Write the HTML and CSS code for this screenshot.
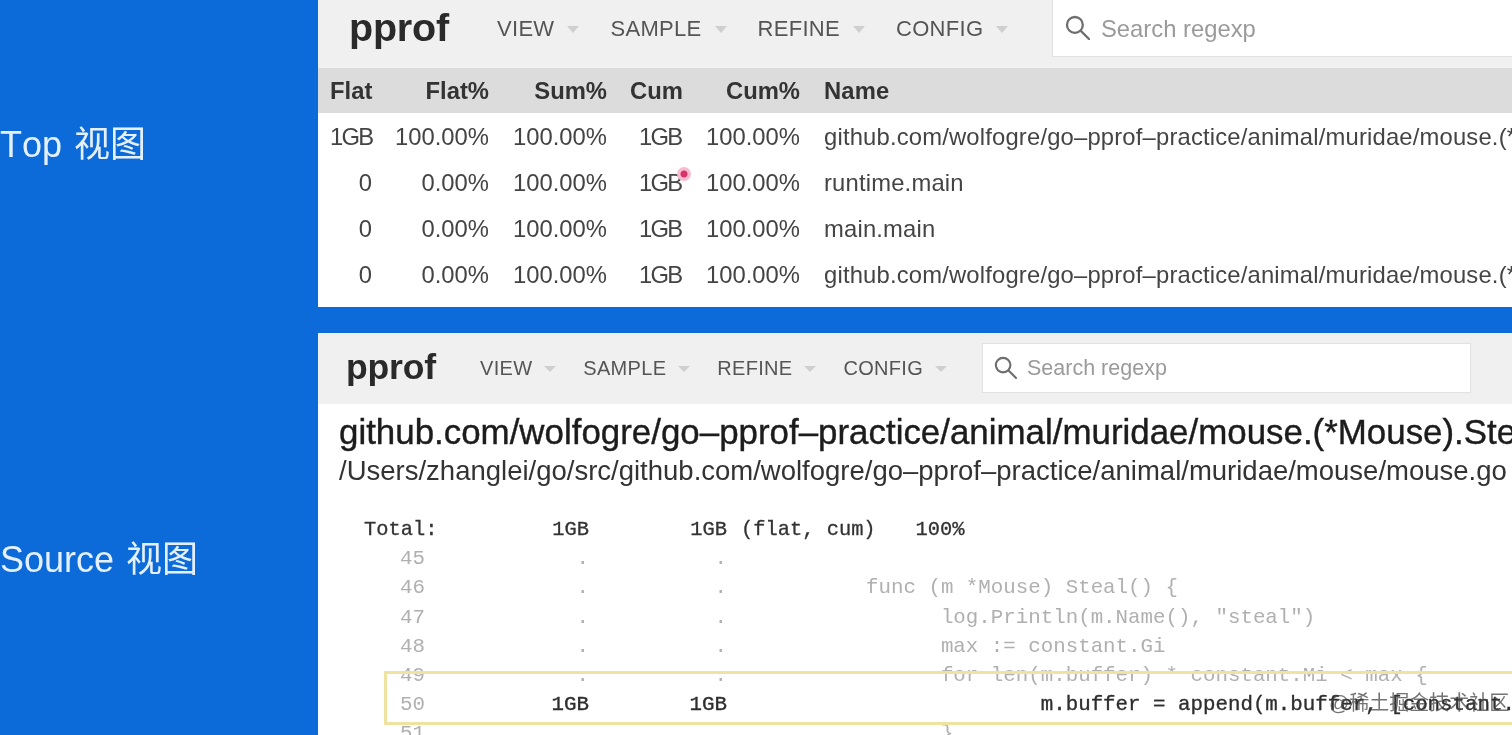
FILE: index.html
```html
<!DOCTYPE html>
<html lang="en">
<head>
<meta charset="utf-8">
<title>pprof views</title>
<link rel="stylesheet" href="styles.css">
</head>
<body>
<div class="slide">
  <aside class="side">
    <div class="label label-top">Top 视图</div>
    <div class="label label-source">Source 视图</div>
  </aside>
  <main class="main">
    <section class="panel panel-top">
      <header class="bar bar-lg">
        <div class="brand">pprof</div>
        <nav class="nav">
          <span class="nav-item">VIEW<i class="tri"></i></span>
          <span class="nav-item">SAMPLE<i class="tri"></i></span>
          <span class="nav-item">REFINE<i class="tri"></i></span>
          <span class="nav-item">CONFIG<i class="tri"></i></span>
        </nav>
        <div class="search">
          <svg class="glass" viewBox="0 0 24 24" fill="none" stroke="currentColor" stroke-width="2.2" stroke-linecap="round"><circle cx="9.5" cy="9.5" r="7.6"/><path d="M15.2 15.2 23 23"/></svg>
          <span class="placeholder">Search regexp</span>
        </div>
      </header>
      <div class="table">
        <div class="tr th"><span>Flat</span><span>Flat%</span><span>Sum%</span><span>Cum</span><span>Cum%</span><span class="name">Name</span></div>
        <div class="tr"><span class="gb">1GB</span><span>100.00%</span><span>100.00%</span><span class="gb">1GB</span><span>100.00%</span><span class="name">github.com/wolfogre/go–pprof–practice/animal/muridae/mouse.(*Mouse).Steal</span></div>
        <div class="tr"><span>0</span><span>0.00%</span><span>100.00%</span><span class="gb has-dot">1GB<i class="cursor-dot"></i></span><span>100.00%</span><span class="name">runtime.main</span></div>
        <div class="tr"><span>0</span><span>0.00%</span><span>100.00%</span><span class="gb">1GB</span><span>100.00%</span><span class="name">main.main</span></div>
        <div class="tr"><span>0</span><span>0.00%</span><span>100.00%</span><span class="gb">1GB</span><span>100.00%</span><span class="name">github.com/wolfogre/go–pprof–practice/animal/muridae/mouse.(*Mouse).Live</span></div>
      </div>
    </section>
    <section class="panel panel-source">
      <header class="bar bar-sm">
        <div class="brand">pprof</div>
        <nav class="nav">
          <span class="nav-item">VIEW<i class="tri"></i></span>
          <span class="nav-item">SAMPLE<i class="tri"></i></span>
          <span class="nav-item">REFINE<i class="tri"></i></span>
          <span class="nav-item">CONFIG<i class="tri"></i></span>
        </nav>
        <div class="search">
          <svg class="glass" viewBox="0 0 24 24" fill="none" stroke="currentColor" stroke-width="2.2" stroke-linecap="round"><circle cx="9.5" cy="9.5" r="7.6"/><path d="M15.2 15.2 23 23"/></svg>
          <span class="placeholder">Search regexp</span>
        </div>
      </header>
      <div class="source">
        <h1 class="fn">github.com/wolfogre/go–pprof–practice/animal/muridae/mouse.(*Mouse).Steal</h1>
        <p class="path">/Users/zhanglei/go/src/github.com/wolfogre/go–pprof–practice/animal/muridae/mouse/mouse.go</p>
        <div class="code">
          <div class="ln total"><span class="no">Total:</span><span class="v">1GB</span><span class="v">1GB</span><span class="src">(flat, cum)<span class="pct">100%</span></span></div>
          <div class="ln"><span class="no">45</span><span class="v">.</span><span class="v">.</span><span class="src"></span></div>
          <div class="ln"><span class="no">46</span><span class="v">.</span><span class="v">.</span><span class="src">func (m *Mouse) Steal() {</span></div>
          <div class="ln"><span class="no">47</span><span class="v">.</span><span class="v">.</span><span class="src">      log.Println(m.Name(), "steal")</span></div>
          <div class="ln"><span class="no">48</span><span class="v">.</span><span class="v">.</span><span class="src">      max := constant.Gi</span></div>
          <div class="ln"><span class="no">49</span><span class="v">.</span><span class="v">.</span><span class="src">      for len(m.buffer) * constant.Mi &lt; max {</span></div>
          <div class="ln hot"><span class="no">50</span><span class="v">1GB</span><span class="v">1GB</span><span class="src">              m.buffer = append(m.buffer, [constant.Mi]byte{}...)</span></div>
          <div class="ln"><span class="no">51</span><span class="v">.</span><span class="v">.</span><span class="src">      }</span></div>
        </div>
        <div class="highlight"></div>
        <div class="watermark">@稀土掘金技术社区</div>
      </div>
    </section>
  </main>
</div>
</body>
</html>
```
FILE: styles.css
```css
* { box-sizing: border-box; }
html, body { margin: 0; height: 100%; overflow: hidden; background: #0c6bd9; }
body { font-family: "Liberation Sans", Arial, "Noto Sans CJK SC", sans-serif; }

.slide { display: flex; width: 1512px; height: 735px; filter: blur(0.55px); background: #0c6bd9; }

.side { width: 318px; flex: none; color: #e4f0fb; }
.label { font-size: 36px; line-height: 44px; white-space: nowrap; font-kerning: none; word-spacing: 2px; font-family: "Liberation Sans", "Noto Sans CJK SC", sans-serif; }
.label-top { margin-top: 123px; }
.label-source { margin-top: 371px; }

.main { flex: 1; min-width: 0; display: flex; flex-direction: column; gap: 26px; }
.panel { background: #fff; overflow: hidden; flex: none; }
.panel-top { height: 307px; }
.panel-source { height: 402px; position: relative; }

.bar { display: flex; align-items: center; background: #f0f0f0; white-space: nowrap; }
.brand { flex: none; font-weight: 700; color: #2a2a2a; letter-spacing: -0.2px; }
.nav { flex: none; display: flex; color: #555; padding-top: 2px; letter-spacing: 0.3px; }
.nav-item { display: flex; align-items: center; }
.tri { display: block; width: 0; height: 0; border-style: solid; border-color: #cfcfcf transparent transparent; }
.search { display: flex; align-items: center; background: #fff; border: 1px solid #e2e2e2; flex: none; color: #6e6e6e; }
.glass { display: block; flex: none; }
.placeholder { color: #9a9a9a; padding-top: 2px; }

.bar-lg { height: 68px; padding: 0 0 12px 31px; }
.bar-lg .brand { font-size: 39.5px; width: 148px; margin-bottom: 2px; }
.bar-lg .nav { font-size: 22px; gap: 31px; width: 555px; }
.bar-lg .nav-item { gap: 13px; }
.bar-lg .tri { border-width: 7px 6px 0; }
.bar-lg .search { width: 700px; height: 57px; font-size: 23.8px; padding-left: 12px; border-top: 0; gap: 11px; }
.bar-lg .glass { width: 25px; height: 25px; }

.bar-sm { height: 71px; padding: 0 0 2px 28px; }
.bar-sm .brand { font-size: 35.6px; width: 134px; }
.bar-sm .nav { font-size: 20px; gap: 27px; width: 502px; }
.bar-sm .nav-item { gap: 12px; }
.bar-sm .tri { border-width: 6px 6px 0; }
.bar-sm .search { width: 489px; height: 50px; font-size: 21.5px; padding-left: 11px; gap: 10px; }
.bar-sm .glass { width: 23px; height: 23px; }

.table { font-size: 23.8px; color: #444; }
.tr { display: grid; grid-template-columns: 42px 117px 118px 76px 117px 1fr; height: 46px; align-items: center; padding-left: 12px; white-space: nowrap; }
.tr span { text-align: right; }
.tr .gb { letter-spacing: -1.8px; padding-right: 1.8px; }
.tr .name { text-align: left; padding-left: 24px; overflow: hidden; letter-spacing: 0.18px; }
.th { height: 45px; background: #dcdcdc; font-weight: 700; color: #333; margin-bottom: 1px; }
.has-dot { position: relative; }
.cursor-dot { position: absolute; left: 70px; top: -2px; width: 14px; height: 14px; border-radius: 50%; background: radial-gradient(circle, #d8326a 0 3px, #f7bcd0 4px 7px); }

.source { padding: 8px 0 0 21px; position: relative; }
.fn { margin: 0; font-size: 34.9px; line-height: 40px; font-weight: 400; color: #1c1c1c; white-space: nowrap; -webkit-text-stroke: 0.4px #1c1c1c; }
.path { margin: 0; font-size: 27.5px; line-height: 38px; color: #333; white-space: nowrap; }

.code { margin-top: 25px; font-family: "Liberation Mono", "Courier New", monospace; font-size: 20.8px; color: #b0b0b0; }
.ln { display: grid; grid-template-columns: 61px 164px 138px 1fr; height: 29.2px; line-height: 29.2px; margin-left: 25px; white-space: pre; }
.ln .no { text-align: right; }
.ln .v { text-align: right; }
.ln .src { padding-left: 139px; }
.total { color: #333; font-size: 20.4px; -webkit-text-stroke: 0.3px #333; }
.total .no { text-align: left; }
.total .src { padding-left: 14px; }
.pct { margin-left: 40px; }
.hot { color: #2e2e2e; -webkit-text-stroke: 0.35px #2e2e2e; }
.hot .no { color: #b0b0b0; -webkit-text-stroke: 0; }

.highlight { position: absolute; left: 66px; top: 267px; width: 1200px; height: 54px; border: 3px solid #efe3a2; pointer-events: none; }
.watermark { position: absolute; left: 1011px; top: 287px; font-size: 20px; line-height: 24px; color: rgba(70,70,70,.75); white-space: nowrap; font-family: "Liberation Sans", "Noto Sans CJK SC", sans-serif; }
```
